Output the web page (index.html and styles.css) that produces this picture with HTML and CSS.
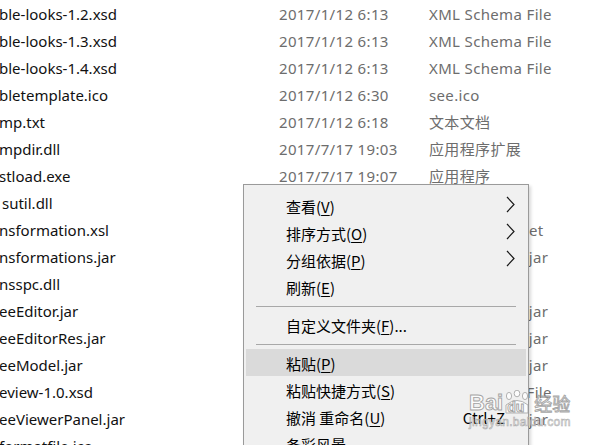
FILE: index.html
```html
<!DOCTYPE html>
<html lang="zh-CN">
<head>
    <meta charset="UTF-8">
    <title>文件夹</title>
    <link rel="stylesheet" href="styles.css">
</head>
<body>
    <div class="files">
        <div class="row"><span class="name">ble-looks-1.2.xsd</span><span class="date">2017/1/12 6:13</span><span class="type">XML Schema File</span></div>
        <div class="row"><span class="name">ble-looks-1.3.xsd</span><span class="date">2017/1/12 6:13</span><span class="type">XML Schema File</span></div>
        <div class="row"><span class="name">ble-looks-1.4.xsd</span><span class="date">2017/1/12 6:13</span><span class="type">XML Schema File</span></div>
        <div class="row"><span class="name">bletemplate.ico</span><span class="date">2017/1/12 6:30</span><span class="type">see.ico</span></div>
        <div class="row"><span class="name">mp.txt</span><span class="date">2017/1/12 6:18</span><span class="type">文本文档</span></div>
        <div class="row"><span class="name">mpdir.dll</span><span class="date">2017/7/17 19:03</span><span class="type">应用程序扩展</span></div>
        <div class="row"><span class="name">stload.exe</span><span class="date">2017/7/17 19:07</span><span class="type">应用程序</span></div>
        <div class="row"><span class="name indent">sutil.dll</span><span class="date">2017/7/17 19:03</span><span class="type">应用程序扩展</span></div>
        <div class="row"><span class="name">nsformation.xsl</span><span class="date">2017/1/12 6:13</span><span class="type">XSLT Stylesheet</span></div>
        <div class="row"><span class="name">nsformations.jar</span><span class="date">2017/1/12 6:13</span><span class="type">Java 归档文件 jar</span></div>
        <div class="row"><span class="name">nsspc.dll</span><span class="date">2017/7/17 19:03</span><span class="type">应用程序扩展</span></div>
        <div class="row"><span class="name">eeEditor.jar</span><span class="date">2017/1/12 6:13</span><span class="type">Java 归档文件 jar</span></div>
        <div class="row"><span class="name">eeEditorRes.jar</span><span class="date">2017/1/12 6:13</span><span class="type">Java 归档文件 jar</span></div>
        <div class="row"><span class="name">eeModel.jar</span><span class="date">2017/1/12 6:13</span><span class="type">Java 归档文件 jar</span></div>
        <div class="row"><span class="name">eview-1.0.xsd</span><span class="date">2017/1/12 6:13</span><span class="type">XML Schema File</span></div>
        <div class="row"><span class="name">eeViewerPanel.jar</span><span class="date">2017/1/12 6:13</span><span class="type">Java 归档文件 jar</span></div>
        <div class="row"><span class="name">formatfile.ico</span><span class="date">2017/1/12 6:30</span><span class="type">see.ico</span></div>
    </div>

    <div class="menu">
        <div class="item"><span>查看(<u>V</u>)</span><svg class="arrow" width="9" height="17" viewBox="0 0 9 17"><polyline points="1,1 8,8.5 1,16"/></svg></div>
        <div class="item"><span>排序方式(<u>O</u>)</span><svg class="arrow" width="9" height="17" viewBox="0 0 9 17"><polyline points="1,1 8,8.5 1,16"/></svg></div>
        <div class="item"><span>分组依据(<u>P</u>)</span><svg class="arrow" width="9" height="17" viewBox="0 0 9 17"><polyline points="1,1 8,8.5 1,16"/></svg></div>
        <div class="item"><span>刷新(<u>E</u>)</span></div>
        <div class="sep"></div>
        <div class="item"><span>自定义文件夹(<u>F</u>)...</span></div>
        <div class="sep"></div>
        <div class="item hover"><span>粘贴(<u>P</u>)</span></div>
        <div class="item"><span>粘贴快捷方式(<u>S</u>)</span></div>
        <div class="item"><span>撤消 重命名(<u>U</u>)</span><span class="shortcut">Ctrl+Z</span></div>
        <div class="item"><span>备彩风景</span></div>
    </div>

    <div class="watermark">
        <div class="logo">
            <span class="bai">Bai</span>
            <span class="paw">
                <svg width="26" height="24" viewBox="0 0 26 24">
                    <ellipse cx="5" cy="6" rx="2.6" ry="3.6"/>
                    <ellipse cx="13" cy="3.5" rx="2.8" ry="3.3"/>
                    <ellipse cx="21" cy="6" rx="2.6" ry="3.6"/>
                    <path d="M2 15 Q13 6 24 15 L24 23 L2 23 Z"/>
                </svg>
                <span class="du">du</span>
            </span>
            <span class="jy">经验</span>
        </div>
        <div class="site">jingyan.baidu.com</div>
    </div>
</body>
</html>
```

FILE: styles.css
```css
body {
    margin: 0;
    background: #ffffff;
    font-family: "Noto Sans", "Noto Sans CJK SC", sans-serif;
    font-size: 15px;
    overflow: hidden;
    height: 445px;
}
.files {
    padding-top: 1px;
}
.row {
    display: grid;
    grid-template-columns: 279px 150px 1fr;
    height: 27px;
    line-height: 27px;
    white-space: nowrap;
}
.name {
    color: #111;
    margin-left: -1px;
}
.name.indent {
    margin-left: 2px;
}
.date,
.type {
    color: #6d6d6d;
    letter-spacing: 0.35px;
}
.menu {
    position: absolute;
    left: 243px;
    top: 184px;
    width: 280px;
    padding: 7px 2px 0;
    border: 1px solid #9a9a9a;
    background: #f0f0f0;
    box-shadow: 2px 2px 3px rgba(0, 0, 0, 0.15);
    color: #000;
}
.item {
    display: flex;
    align-items: center;
    height: 27px;
    padding: 2px 0 0 40px;
    box-sizing: border-box;
    font-family: "Noto Sans CJK SC", sans-serif;
}
.item u {
    text-underline-offset: 2px;
}
.item.hover {
    background: #dadada;
}
.arrow {
    margin-left: auto;
    margin-right: 11px;
    margin-top: -4px;
}
.arrow polyline {
    fill: none;
    stroke: #1a1a1a;
    stroke-width: 1.2;
}
.shortcut {
    margin-left: auto;
    margin-right: 21px;
}
.sep {
    height: 1px;
    background: #a8a8a8;
    margin: 6px 10px 4px;
}
.watermark {
    position: absolute;
    left: 469px;
    top: 390px;
    pointer-events: none;
    opacity: 0.8;
}
.logo {
    display: flex;
    align-items: flex-end;
    gap: 1px;
}
.bai,
.du {
    font-family: "Liberation Sans", sans-serif;
    font-weight: bold;
    font-size: 22px;
    color: #fff;
    -webkit-text-stroke: 0.9px #909090;
    line-height: 22px;
}
.paw {
    position: relative;
    width: 26px;
    height: 24px;
}
.paw svg {
    fill: #fff;
    stroke: #999;
    stroke-width: 0.9;
}
.du {
    position: absolute;
    left: 3px;
    bottom: 0;
    font-size: 14px;
    line-height: 14px;
}
.jy {
    font-family: "Noto Sans CJK SC", sans-serif;
    font-size: 18px;
    line-height: 22px;
    color: #fff;
    -webkit-text-stroke: 0.9px #909090;
    margin-left: 3px;
}
.site {
    font-family: "Liberation Sans", sans-serif;
    font-size: 12px;
    color: #fff;
    -webkit-text-stroke: 0.6px #999;
    margin-top: 1px;
    letter-spacing: 0.3px;
}
```
